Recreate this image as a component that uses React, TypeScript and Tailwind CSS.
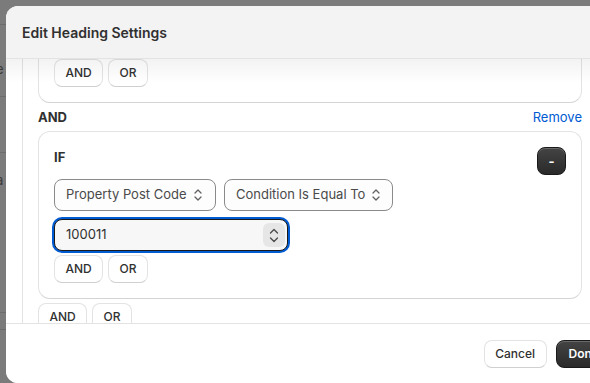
import React from "react";

function SelectChevrons() {
  return (
    <svg width="12" height="14" viewBox="0 0 12 14" fill="none" stroke="#616161" strokeWidth="1.3" strokeLinecap="round" strokeLinejoin="round">
      <path d="M3 5 L6 2 L9 5" />
      <path d="M3 9 L6 12 L9 9" />
    </svg>
  );
}

function SmallBtn({ label, w }: { label: string; w: string }) {
  return (
    <button className={`h-7 ${w} rounded-[8px] border border-[#e3e3e3] border-b-[#cfcfcf] bg-white text-[12px] font-[450] text-[#303030] flex items-center justify-center`}>
      {label}
    </button>
  );
}

function AndOr() {
  return (
    <div className="flex gap-[5px]">
      <SmallBtn label="AND" w="w-[49px]" />
      <SmallBtn label="OR" w="w-[40px]" />
    </div>
  );
}

function ConditionCard({ focused }: { focused?: boolean }) {
  return (
    <div className="w-[544px] rounded-[12px] border border-[#e3e3e3] border-b-[#d4d4d4] bg-white p-[15px] flex flex-col">
      <div className="flex items-start justify-between h-7">
        <span className="text-[13px] leading-5 font-bold text-[#303030]">IF</span>
        <button className="w-[29px] h-7 rounded-[8px] bg-gradient-to-b from-[#444444] to-[#2a2a2a] border border-[#1a1a1a] shadow-[inset_0_1px_0_rgba(255,255,255,0.2)] text-white text-[13px] font-bold flex items-center justify-center leading-none">
          -
        </button>
      </div>
      <div className="mt-1 flex gap-2">
        <div className="h-8 w-[162px] rounded-[8px] border border-[#8a8a8a] bg-[#fdfdfd] pl-[11px] flex items-center gap-[5px] text-[13px] text-[#4a4a4a]">
          <span>Property Post Code</span>
          <SelectChevrons />
        </div>
        <div className="h-8 w-[169px] rounded-[8px] border border-[#8a8a8a] bg-[#fdfdfd] pl-[11px] flex items-center gap-[5px] text-[13px] text-[#4a4a4a]">
          <span>Condition Is Equal To</span>
          <SelectChevrons />
        </div>
      </div>
      <div className={`mt-2 h-8 w-[234px] rounded-[8px] border ${focused ? "border-[#1a1a1a] ring-2 ring-[#005bd3]" : "border-[#8a8a8a]"} bg-[#f7f7f7] pl-[11px] pr-[2px] flex items-center text-[13px] text-[#303030]`}>
        <span>100011</span>
        <div className="ml-auto w-[22px] h-[24px] rounded-[6px] bg-[#e6e6e6] flex flex-col items-center justify-center gap-[3px]">
          <svg width="10" height="6" viewBox="0 0 10 6" fill="none" stroke="#4a4a4a" strokeWidth="1.3" strokeLinecap="round" strokeLinejoin="round">
            <path d="M1.5 5 L5 1.5 L8.5 5" />
          </svg>
          <svg width="10" height="6" viewBox="0 0 10 6" fill="none" stroke="#4a4a4a" strokeWidth="1.3" strokeLinecap="round" strokeLinejoin="round">
            <path d="M1.5 1 L5 4.5 L8.5 1" />
          </svg>
        </div>
      </div>
      <div className="mt-1">
        <AndOr />
      </div>
    </div>
  );
}

export default function App() {
  return (
    <div className="relative w-[590px] h-[383px] overflow-hidden bg-[#7b7b7b] font-['Inter',sans-serif]">
      {/* dimmed page behind the modal */}
      <div className="flex flex-col text-[13px] leading-5 text-[#3a3a3a]">
        <div className="h-[25px] border-b border-[#6c6c6c]" />
        <div className="h-[72px] border-b border-[#6c6c6c]">
          <span className="block -ml-[4px] mt-[34px]">e</span>
        </div>
        <div className="h-[56px] border-b border-[#6c6c6c]" />
        <div className="h-[160px] border-b border-[#6c6c6c]">
          <span className="block -ml-[4px] mt-[17px]">a</span>
        </div>
        <div className="h-[17px] border-b border-[#6c6c6c]" />
      </div>

      {/* modal */}
      <div className="absolute left-[6px] top-[6px] w-[620px] h-[377px] rounded-[12px] bg-white overflow-hidden flex flex-col">
        <div className="h-[53px] shrink-0 bg-[#f3f3f3] border-b border-[#e3e3e3] px-4 flex items-center">
          <h2 className="text-[14px] font-semibold text-[#303030]">Edit Heading Settings</h2>
        </div>

        <div className="relative flex-1 min-h-0 overflow-hidden flex">
          <div className="ml-4 w-[588px] border-l border-r border-[#e3e3e3] pl-[15px]">
            <div className="mt-[-124px] flex flex-col">
              <ConditionCard />
              <div className="mt-[5px] h-5 w-[544px] flex items-center justify-between">
                <span className="text-[13px] font-bold text-[#303030]">AND</span>
                <span className="text-[13px] text-[#005bd3]">Remove</span>
              </div>
              <div className="mt-[3px]">
                <ConditionCard focused />
              </div>
              <div className="mt-1">
                <AndOr />
              </div>
            </div>
          </div>
          <div className="absolute inset-x-0 top-0 h-6 bg-gradient-to-b from-black/[0.05] to-transparent" />
        </div>

        <div className="h-[60px] shrink-0 border-t border-[#e3e3e3] bg-white flex items-center justify-end gap-[9px] pr-[14px]">
          <button className="h-7 w-[63px] rounded-[8px] border border-[#e3e3e3] border-b-[#cfcfcf] bg-white text-[12px] font-[450] text-[#303030]">
            Cancel
          </button>
          <button className="h-7 px-3 rounded-[8px] bg-gradient-to-b from-[#444444] to-[#2a2a2a] border border-[#1a1a1a] shadow-[inset_0_1px_0_rgba(255,255,255,0.2)] text-[12px] font-semibold text-white">
            Done
          </button>
        </div>
      </div>
    </div>
  );
}
